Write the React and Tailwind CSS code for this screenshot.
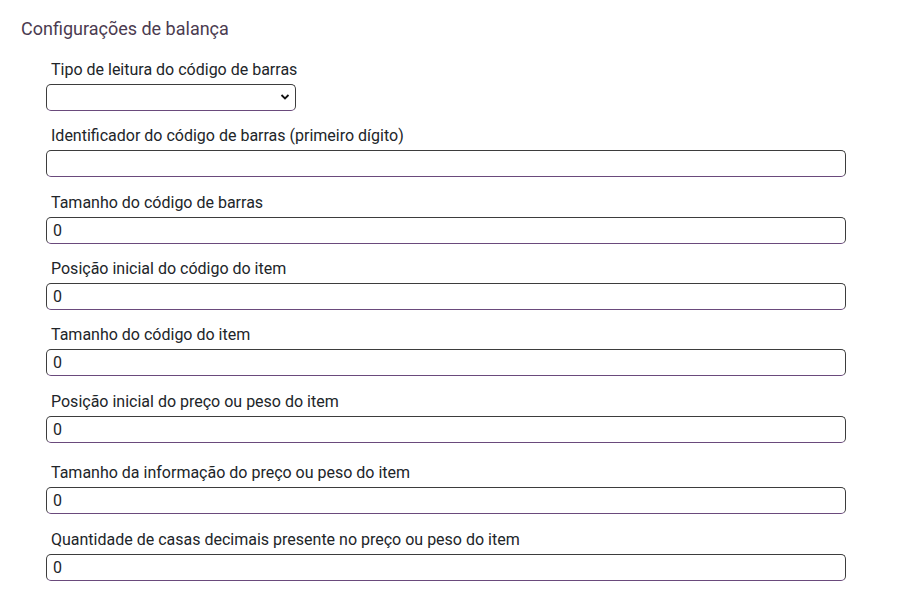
import React from "react";

const fields = [
  { label: "Identificador do código de barras (primeiro dígito)", value: "", mt: "mt-[15px]" },
  { label: "Tamanho do código de barras", value: "0", mt: "mt-[16px]" },
  { label: "Posição inicial do código do item", value: "0", mt: "mt-[15px]" },
  { label: "Tamanho do código do item", value: "0", mt: "mt-[15px]" },
  { label: "Posição inicial do preço ou peso do item", value: "0", mt: "mt-[16px]" },
  { label: "Tamanho da informação do preço ou peso do item", value: "0", mt: "mt-[20px]" },
  { label: "Quantidade de casas decimais presente no preço ou peso do item", value: "0", mt: "mt-[16px]" },
];

const inputCls =
  "block h-[27px] rounded-[5px] border border-[#3d3d3d] border-b-[#6a4a7c] bg-white px-[6px] text-[16px] text-[#212529] outline-none";

export default function App() {
  return (
    <div className="min-h-[606px] w-[904px] bg-white font-['Roboto',sans-serif]">
      <div className="pl-[21px] pt-[18px]">
        <h2 className="text-[18px] leading-[22px] text-[#4b3b50]">Configurações de balança</h2>
        <div className="pl-[25px] pt-[20px]">
          <label className="ml-[5px] block text-[16px] leading-[19px] text-[#212529]">
            Tipo de leitura do código de barras
          </label>
          <div className="relative mt-[5px] w-[250px]">
            <select className={inputCls + " h-[26px] w-[250px] appearance-none"} defaultValue="">
              <option value=""></option>
            </select>
            <svg
              className="pointer-events-none absolute right-[6px] top-[9px]"
              width="10"
              height="8"
              viewBox="0 0 10 8"
            >
              <path d="M1.5 2 L5 5.5 L8.5 2" fill="none" stroke="#111" strokeWidth="1.8" />
            </svg>
          </div>
          {fields.map((f) => (
            <div key={f.label} className={f.mt}>
              <label className="ml-[5px] block text-[16px] leading-[19px] text-[#212529]">{f.label}</label>
              <input
                type="text"
                defaultValue={f.value}
                className={inputCls + " mt-[5px] w-[800px]"}
              />
            </div>
          ))}
        </div>
      </div>
    </div>
  );
}
